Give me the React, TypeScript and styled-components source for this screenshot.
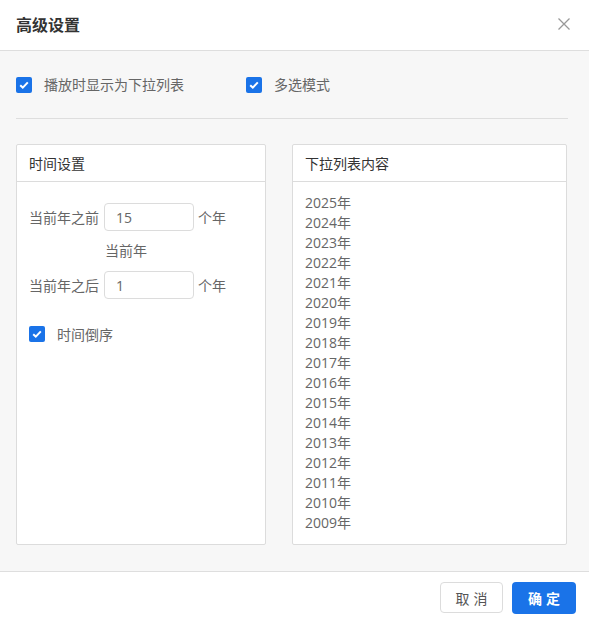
import React from "react";
import styled, { createGlobalStyle } from "styled-components";

const GlobalStyle = createGlobalStyle`
  html, body {
    margin: 0;
    padding: 0;
    background: #ffffff;
  }
  body {
    font-family: "Open Sans", "Noto Sans CJK SC", sans-serif;
    -webkit-font-smoothing: antialiased;
  }
`;

const years = Array.from({ length: 17 }, (_, i) => 2025 - i);

function Checkbox({ checked }: { checked: boolean }) {
  return (
    <CheckBox $checked={checked}>
      {checked && (
        <svg width="10" height="8" viewBox="0 0 10 8">
          <path d="M1.2 4.2 L3.8 6.6 L8.8 1.4" fill="none" stroke="#fff" strokeWidth="2" />
        </svg>
      )}
    </CheckBox>
  );
}

export default function App() {
  return (
    <Dialog>
      <GlobalStyle />
      <Header>
        <Title>高级设置</Title>
        <CloseButton aria-label="关闭">
          <svg width="12" height="12" viewBox="0 0 12 12">
            <path d="M0.5 0.5 L11.5 11.5 M11.5 0.5 L0.5 11.5" stroke="#999" strokeWidth="1.3" fill="none" />
          </svg>
        </CloseButton>
      </Header>

      <Body>
        <Options>
          <CheckLabel>
            <Checkbox checked />
            <span>播放时显示为下拉列表</span>
          </CheckLabel>
          <CheckLabel>
            <Checkbox checked />
            <span>多选模式</span>
          </CheckLabel>
        </Options>
        <Divider />
        <Panels>
          <Panel>
            <PanelHeader>时间设置</PanelHeader>
            <TimeContent>
              <FieldRow>
                <FieldLabel>当前年之前</FieldLabel>
                <NumberInput defaultValue="15" />
                <Unit>个年</Unit>
              </FieldRow>
              <CurrentYear>当前年</CurrentYear>
              <FieldRow>
                <FieldLabel>当前年之后</FieldLabel>
                <NumberInput defaultValue="1" />
                <Unit>个年</Unit>
              </FieldRow>
              <ReverseRow>
                <Checkbox checked />
                <span>时间倒序</span>
              </ReverseRow>
            </TimeContent>
          </Panel>
          <Panel>
            <PanelHeader>下拉列表内容</PanelHeader>
            <YearList>
              {years.map((y) => (
                <YearItem key={y}>{y}年</YearItem>
              ))}
            </YearList>
          </Panel>
        </Panels>
      </Body>

      <Footer>
        <Button>取消</Button>
        <Button $primary>确定</Button>
      </Footer>
    </Dialog>
  );
}

const Dialog = styled.div`
  width: 589px;
  height: 619px;
  display: flex;
  flex-direction: column;
  background: #fff;
  overflow: hidden;
`;

const Header = styled.div`
  height: 50px;
  flex-shrink: 0;
  display: flex;
  align-items: center;
  justify-content: space-between;
  padding: 0 19px 0 16px;
  border-bottom: 1px solid #dedede;
`;

const Title = styled.div`
  font-size: 16px;
  font-weight: 600;
  color: #333;
  margin-top: -2px;
`;

const CloseButton = styled.div`
  width: 12px;
  height: 12px;
  display: flex;
  margin-top: -2px;
  cursor: pointer;
`;

const Body = styled.div`
  flex: 1;
  background: #f7f7f7;
  padding: 24px 21px 0 16px;
`;

const Options = styled.div`
  display: flex;
  align-items: center;
  height: 20px;
  gap: 62px;
`;

const CheckLabel = styled.label`
  display: flex;
  align-items: center;
  gap: 12px;
  font-size: 14px;
  color: #666;
  line-height: 20px;
`;

const CheckBox = styled.span<{ $checked: boolean }>`
  width: 16px;
  height: 16px;
  border-radius: 2px;
  box-sizing: border-box;
  display: inline-flex;
  align-items: center;
  justify-content: center;
  flex-shrink: 0;
  background: ${(p) => (p.$checked ? "#1a73e8" : "#fff")};
  border: ${(p) => (p.$checked ? "none" : "1px solid #ccc")};
`;

const Divider = styled.div`
  height: 1px;
  background: #dedede;
  margin: 23px 0 0 0;
  width: 552px;
`;

const Panels = styled.div`
  display: grid;
  grid-template-columns: 250px 275px;
  column-gap: 26px;
  margin-top: 25px;
  height: 401px;
`;

const Panel = styled.div`
  background: #fff;
  border: 1px solid #dcdcdc;
  border-radius: 2px;
  display: flex;
  flex-direction: column;
`;

const PanelHeader = styled.div`
  height: 36px;
  flex-shrink: 0;
  display: flex;
  align-items: center;
  padding: 0 12px;
  font-size: 14px;
  color: #333;
  border-bottom: 1px solid #dcdcdc;
`;

const TimeContent = styled.div`
  padding: 21px 12px 0;
`;

const FieldRow = styled.div`
  display: flex;
  align-items: center;
  height: 28px;
`;

const FieldLabel = styled.span`
  width: 75px;
  font-size: 14px;
  color: #666;
`;

const NumberInput = styled.input`
  width: 90px;
  height: 28px;
  box-sizing: border-box;
  border: 1px solid #dcdcdc;
  border-radius: 4px;
  padding: 0 11px;
  font-family: "Open Sans", "Noto Sans CJK SC", sans-serif;
  font-size: 14px;
  color: #666;
  outline: none;
`;

const Unit = styled.span`
  margin-left: 4px;
  font-size: 14px;
  color: #666;
`;

const CurrentYear = styled.div`
  margin: 10px 0 10px 76px;
  line-height: 20px;
  font-size: 14px;
  color: #666;
`;

const ReverseRow = styled.div`
  display: flex;
  align-items: center;
  gap: 12px;
  margin-top: 25px;
  height: 20px;
  font-size: 14px;
  color: #666;
`;

const YearList = styled.div`
  padding: 11px 12px 0;
`;

const YearItem = styled.div`
  font-size: 14px;
  line-height: 20px;
  color: #666;
`;

const Footer = styled.div`
  height: 48px;
  flex-shrink: 0;
  border-top: 1px solid #dedede;
  display: flex;
  justify-content: flex-end;
  align-items: flex-start;
  gap: 9px;
  padding: 10px 13px 0 0;
  box-sizing: border-box;
`;

const Button = styled.button<{ $primary?: boolean }>`
  width: ${(p) => (p.$primary ? "64px" : "63px")};
  height: ${(p) => (p.$primary ? "32px" : "31px")};
  box-sizing: border-box;
  border-radius: 4px;
  font-family: "Open Sans", "Noto Sans CJK SC", sans-serif;
  font-size: 14px;
  letter-spacing: 4px;
  text-indent: 4px;
  padding: 0;
  cursor: pointer;
  font-weight: ${(p) => (p.$primary ? 700 : 400)};
  color: ${(p) => (p.$primary ? "#fff" : "#555")};
  background: ${(p) => (p.$primary ? "#1a73e8" : "#fff")};
  border: ${(p) => (p.$primary ? "none" : "1px solid #dcdcdc")};
`;
